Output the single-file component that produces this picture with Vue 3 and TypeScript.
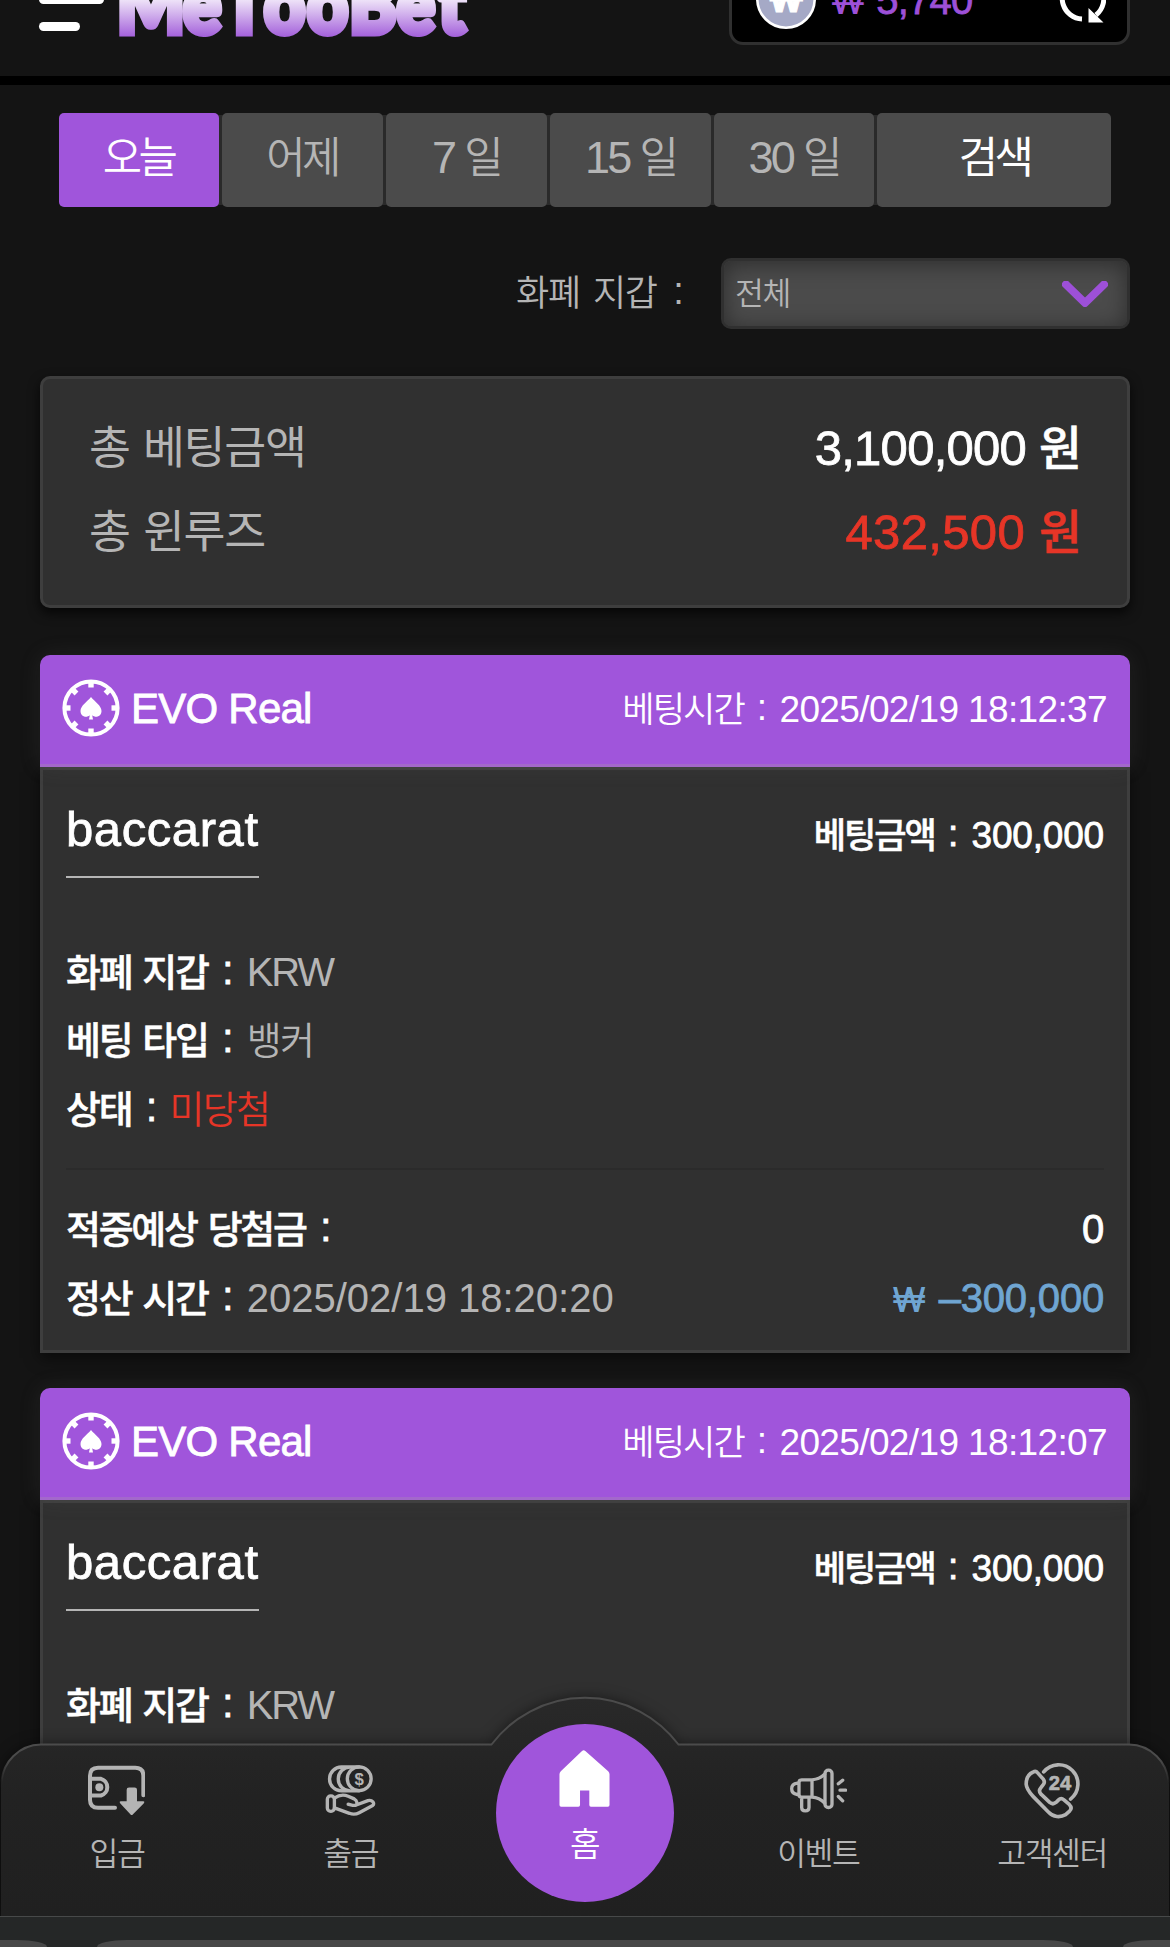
<script setup lang="ts">
import { h, ref } from 'vue'

interface Bet {
  provider: string
  placedAt: string
  game: string
  amount: string
  wallet: string
  betType: string
  status: string
  expected: string
  settledAt: string
  result: string
}

/* Splits mixed text into Hangul, label colons and Latin runs so each gets its own metrics. */
const Mixed = (props: { text: string }) =>
  h(
    'span',
    { class: 'mixed' },
    props.text
      .split(/([\uac00-\ud7a3]+|(?<= ):)/)
      .filter((run) => run)
      .map((run) => {
        if (run === ':') return h('span', { class: 'colon' }, run)
        return /[\uac00-\ud7a3]/.test(run) ? h('span', { class: 'ko' }, run) : run
      })
  )
Mixed.props = ['text']

const ranges = ['오늘', '어제', '7 일', '15 일', '30 일']
const activeRange = ref(0)

const bets: Bet[] = ['18:12:37', '18:12:07'].map((time) => ({
  provider: 'EVO Real',
  placedAt: `2025/02/19 ${time}`,
  game: 'baccarat',
  amount: '300,000',
  wallet: 'KRW',
  betType: '뱅커',
  status: '미당첨',
  expected: '0',
  settledAt: '2025/02/19 18:20:20',
  result: '–300,000',
}))

const ticks = [0, 45, 90, 135, 180, 225, 270, 315]
</script>

<template>
  <div class="page">
    <header class="top">
      <div class="top-row">
        <div class="menu"><i></i><i></i><i class="short"></i></div>
        <svg class="logo" viewBox="118 -47 352 92" width="352" height="92">
          <defs>
            <linearGradient id="logoFill" gradientUnits="userSpaceOnUse" x1="0" y1="-12" x2="0" y2="40">
              <stop offset="0" stop-color="#fff" />
              <stop offset="0.25" stop-color="#ecdff7" />
              <stop offset="1" stop-color="#9d55d8" />
            </linearGradient>
          </defs>
          <text transform="scale(0.88 1)" y="32.500" x="133 208 253 300 349 397 451 498">MeTooBet</text>
        </svg>
        <div class="balance">
          <svg class="coin" viewBox="-30 -30 60 60" width="60" height="60">
            <circle r="28.7" fill="#a5a9c6" stroke="#fff" stroke-width="2.6" />
            <text y="13" text-anchor="middle">₩</text>
          </svg>
          <span class="money"><span class="won">₩</span> 5,740</span>
          <svg class="refresh" viewBox="-24 -24 48 48" width="48" height="48">
            <path d="M0 20A20.8 20.8 0 0 1-12-17M-2-20.8A20.8 20.8 0 0 1 14 16" fill="none" stroke="#fff" stroke-width="5" />
            <path d="M6.500 9V23.500H21.500Z M-6-23V-9H-20Z" fill="#fff" />
          </svg>
        </div>
      </div>
    </header>

    <main>
      <div class="tabs">
        <button
          v-for="(r, i) in ranges"
          :key="r"
          class="tab"
          :class="{ active: i === activeRange }"
          @click="activeRange = i"
        ><Mixed :text="r" /></button>
        <button class="tab search"><Mixed text="검색" /></button>
      </div>

      <div class="filter">
        <span class="filter-label"><Mixed text="화폐 지갑 :" /></span>
        <div class="select">
          <Mixed text="전체" />
          <svg viewBox="0 0 46 26" width="46" height="26">
            <path d="M4 3.500L23 22L42 3.500" fill="none" stroke="#9d50d8" stroke-width="8" stroke-linecap="round" stroke-linejoin="round" />
          </svg>
        </div>
      </div>

      <section class="summary">
        <div><Mixed text="총 베팅금액" /><b class="med total"><Mixed text="3,100,000 원" /></b></div>
        <div><Mixed text="총 윈루즈" /><b class="med red"><Mixed text="432,500 원" /></b></div>
      </section>

      <article v-for="bet in bets" :key="bet.placedAt" class="bet">
        <div class="bet-head">
          <svg class="chip" viewBox="-29 -29 58 58" width="58" height="58">
            <circle r="26.6" fill="none" stroke="#fff" stroke-width="4" />
            <rect v-for="t in ticks" :key="t" x="-2.700" y="-26" width="5.400" height="5.500" fill="#fff" :transform="`rotate(${t})`" />
            <path
              d="M0-11C3.500-6.500 10.500-2.500 10.500 3C10.500 8.200 5 10.500 1.200 7.300L2 11.500H-2L-1.200 7.300C-5 10.500-10.500 8.200-10.500 3C-10.500-2.500-3.500-6.500 0-11Z"
              fill="#fff"
            />
          </svg>
          <span class="provider med">{{ bet.provider }}</span>
          <span class="placed"><Mixed :text="`베팅시간 : ${bet.placedAt}`" /></span>
        </div>
        <div class="bet-body">
          <div class="title-row">
            <span class="game med">{{ bet.game }}</span>
            <span class="amount med"><Mixed :text="`베팅금액 : ${bet.amount}`" /></span>
          </div>
          <div class="rows">
            <div><b class="med"><Mixed text="화폐 지갑 :" /></b><span class="val wallet">{{ bet.wallet }}</span></div>
            <div><b class="med"><Mixed text="베팅 타입 :" /></b><span class="val"><Mixed :text="bet.betType" /></span></div>
            <div><b class="med"><Mixed text="상태 :" /></b><span class="val red"><Mixed :text="bet.status" /></span></div>
          </div>
          <div class="rows settle">
            <div><b class="med"><Mixed text="적중예상 당첨금 :" /></b><b class="med end">{{ bet.expected }}</b></div>
            <div>
              <b class="med"><Mixed text="정산 시간 :" /></b><span class="val">{{ bet.settledAt }}</span>
              <b class="med end blue"><span class="won">₩</span> {{ bet.result }}</b>
            </div>
          </div>
        </div>
      </article>
    </main>

    <nav class="dock">
      <svg class="dock-shape" viewBox="0 0 1170 232" width="1170" height="232">
        <defs>
          <linearGradient id="dockFill" x1="0" y1="0" x2="0" y2="1">
            <stop offset="0" stop-color="#292929" />
            <stop offset="0.45" stop-color="#222" />
            <stop offset="1" stop-color="#202020" />
          </linearGradient>
          <linearGradient id="dockEdge" gradientUnits="userSpaceOnUse" x1="0" y1="75" x2="0" y2="100">
            <stop offset="0" stop-color="#4b4b4b" />
            <stop offset="1" stop-color="#4b4b4b" stop-opacity="0" />
          </linearGradient>
        </defs>
        <path
          class="dock-bg"
          d="M1 232V100.500A40 40 0 0 1 41 60.500H491.500A117 117 0 0 1 678.500 60.500H1129A40 40 0 0 1 1169 100.500V232Z"
          fill="url(#dockFill)"
        />
        <path
          d="M1.500 100A40 40 0 0 1 41 60.500H491.500A117 117 0 0 1 678.500 60.500H1129A40 40 0 0 1 1168.500 100"
          fill="none"
          stroke="url(#dockEdge)"
          stroke-width="2"
        />
      </svg>
      <div class="dock-items">
        <a class="item">
          <svg viewBox="264 315 171 150" width="57" height="50" fill="none" stroke="#b4b4b4" stroke-width="12" stroke-linecap="round">
            <path d="M430 404V346Q430 322 406 322H294Q270 322 270 346V418Q270 442 294 442H345M270 355H303A26 26 0 0 1 303 405H270" />
            <circle cx="298" cy="380" r="12" fill="#b4b4b4" stroke="none" />
            <path d="M380 388Q380 381 387 381H404Q411 381 411 388V422H429Q436 423 431 429L399 461Q395 466 391 461L361 429Q356 423 363 422H380Z" fill="#b4b4b4" stroke="none" />
          </svg>
          <Mixed text="입금" />
        </a>
        <a class="item">
          <svg viewBox="975 315 152 150" width="51" height="50" fill="none" stroke="#b4b4b4" stroke-width="10" stroke-linecap="round" stroke-linejoin="round">
            <path d="M1024 320A35 35 0 0 0 1024 391M1050 320A35 35 0 0 0 1050 391M1024 320H1077M1024 391H1077" />
            <circle cx="1077" cy="355" r="35.500" />
            <text class="dollar" x="1077" y="373" text-anchor="middle">$</text>
            <rect x="982" y="406" width="21" height="46" rx="10" />
            <path d="M1003 413C1018 402 1032 402 1044 407L1062 415C1071 420 1073 432 1066 434C1058 436 1050 431 1044 431M1066 434L1103 420C1116 417 1125 428 1117 435L1077 456C1066 462 1058 462 1048 458L1003 442" />
          </svg>
          <Mixed text="출금" />
        </a>
        <a class="item home">
          <svg viewBox="477 271 153 172" width="51" height="57">
            <path
              d="M546 274Q551 270 556 274L625 335Q629 339 629 344V437Q629 442 624 442H573Q568 442 568 437V393H540V437Q540 442 535 442H483Q478 442 478 437V344Q478 339 482 335Z"
              fill="#fff"
            />
          </svg>
          <Mixed text="홈" />
        </a>
        <a class="item">
          <svg viewBox="120 315 171 150" width="57" height="50" fill="none" stroke="#b4b4b4" stroke-width="10" stroke-linecap="round" stroke-linejoin="round">
            <path d="M147 368H142Q125 370 125 385Q125 400 142 402H147M147 366Q147 358 155 358H186V410H155Q147 410 147 402ZM186 358Q208 357 224 341M186 410Q208 411 224 428M155 411V441Q155 451 166 451Q177 451 177 441V411" />
            <rect x="225" y="329" width="21" height="112" rx="10" />
            <path d="M265 370L278 359M270 389H287M265 408L278 421" />
          </svg>
          <Mixed text="이벤트" />
        </a>
        <a class="item">
          <svg viewBox="823 304 170 172" width="56.700" height="57.300" fill="none" stroke="#b4b4b4" stroke-width="11" stroke-linecap="round" stroke-linejoin="round">
            <path d="M882 334A58 58 0 1 1 963 416" />
            <path d="M849 335C836 341 829 355 829 371C830 386 840 397 849 407L896 455C911 471 932 472 948 463L960 452C967 445 965 438 959 432L943 418C937 413 931 414 926 419L919 426C913 431 906 431 900 426L873 400C868 394 868 388 873 382L880 373C885 367 885 361 880 355L863 336C859 331 854 332 849 335Z" />
            <text class="all-day" x="931" y="388" text-anchor="middle">24</text>
          </svg>
          <Mixed text="고객센터" />
        </a>
      </div>
      <div class="browser-bar"><i class="side"></i><i class="mid"></i><i class="side right"></i></div>
    </nav>
  </div>
</template>

<style>
body {
  margin: 0;
  background: #141414;
}
.mixed .ko {
  font-family: 'Noto Sans CJK KR', sans-serif;
  font-size: 0.95em;
  line-height: 0;
  letter-spacing: var(--ko-ls, -0.045em);
  -webkit-text-stroke: var(--ko-stroke, 0);
}
.mixed .colon {
  position: relative;
  top: -0.05em;
  margin: 0 0.09em;
}
</style>

<style scoped>
.page {
  position: relative;
  width: 1170px;
  height: 1947px;
  overflow: hidden;
  box-sizing: border-box;
  background: #141414;
  color: #b5b5b5;
  font-family: 'Liberation Sans', 'Noto Sans CJK KR', sans-serif;
  font-weight: 350;
  letter-spacing: -0.012em;
  white-space: nowrap;
}
.med {
  --ko-ls: -0.06em;
  --ko-stroke: 0.5px currentColor;
  font-weight: 500;
  color: #fff;
  -webkit-text-stroke: 0.8px currentColor;
}
.page .red { color: #e63527; }
.page .blue { color: #6fa5d2; }
.won {
  margin-right: 2px;
  font-family: Inter, 'Noto Sans', sans-serif;
  font-size: 0.86em;
  line-height: 0;
  -webkit-text-stroke: 0;
}

.top {
  height: 76px;
  overflow: hidden;
  border-bottom: 9px solid #000;
}
.top-row {
  display: flex;
  align-items: center;
  height: 92px;
  margin-top: -47px;
  padding: 0 40px 0 39px;
}
.menu {
  display: flex;
  flex-direction: column;
  gap: 18px;
  width: 65px;
}
.menu i {
  height: 9px;
  border-radius: 4.5px;
  background: #fff;
}
.menu .short { width: 41px; }
.logo {
  flex: none;
  margin-left: 14px;
}
.logo text {
  font: 900 81px Lato, sans-serif;
  letter-spacing: 0;
  fill: url(#logoFill);
  stroke: url(#logoFill);
  stroke-width: 7px;
}
.balance {
  display: flex;
  align-items: center;
  box-sizing: border-box;
  width: 401px;
  height: 92px;
  margin-left: auto;
  padding: 0 21px 0 24px;
  border: 3px solid #303030;
  border-radius: 14px;
  background: #000;
}
.coin text {
  font: 800 33px Inter, sans-serif;
  fill: #fff;
  stroke: #fff;
  stroke-width: 1px;
}
.money {
  margin-left: 15px;
  padding-top: 2px;
  font-size: 40px;
  font-weight: 500;
  line-height: 60px;
  letter-spacing: -0.02em;
  color: #9d50d8;
  -webkit-text-stroke: 0.8px currentColor;
}
.refresh { margin-left: auto; }

.tabs {
  display: grid;
  grid-template-columns: 160px 161px 161px 161px 160px 234px;
  gap: 3px;
  width: 1052px;
  height: 94px;
  margin: 28px 0 0 59px;
  background: linear-gradient(#2a2a2a, #2a2a2a) center / 1040px 90px no-repeat;
}
.tab {
  min-width: 0;
  padding: 0 1px 5px 0;
  border: 0;
  border-radius: 5px;
  background: #4b4b4b;
  color: #b5b5b5;
  font: 350 45px 'Liberation Sans', sans-serif;
  letter-spacing: -0.06em;
  line-height: 89px;
  --ko-ls: -0.085em;
}
.tab.active { background: #a055db; color: #fff; }
.tab.search { padding-left: 2px; color: #fff; font-weight: 400; }

.filter {
  display: flex;
  justify-content: flex-end;
  align-items: center;
  height: 71px;
  margin: 51px 40px 0 0;
}
.filter-label {
  margin-right: 34px;
  font-size: 38px;
  line-height: 71px;
  word-spacing: 0.07em;
  --ko-ls: -0.035em;
}
.select {
  display: flex;
  align-items: center;
  justify-content: space-between;
  box-sizing: border-box;
  width: 409px;
  height: 71px;
  padding: 1px 19px 0 11px;
  border: 3px solid #303030;
  border-radius: 10px;
  background: #4b4b4b;
  box-shadow: inset 0 3px 22px rgba(0, 0, 0, 0.42);
  font-size: 33px;
  line-height: 60px;
}

.summary {
  box-sizing: border-box;
  height: 232px;
  margin: 47px 40px 0;
  padding: 27px 48px 0 46px;
  border: 3px solid #3e3e3e;
  border-radius: 10px;
  background: #303030;
  box-shadow: 0 5px 12px rgba(0, 0, 0, 0.75);
  font-size: 48px;
  font-weight: 400;
  line-height: 84px;
  --ko-ls: -0.027em;
}
.summary div { display: flex; justify-content: space-between; }
.summary b { font-size: 49px; letter-spacing: 0.007em; }
.summary .total { letter-spacing: -0.015em; }

.bet { margin: 47px 40px 0; }
.bet + .bet { margin-top: 35px; }
.bet-head {
  position: relative;
  display: flex;
  align-items: center;
  box-sizing: border-box;
  height: 112px;
  padding: 0 23px 1px 22px;
  border-bottom: 3px solid #a368cb;
  border-radius: 10px 10px 0 0;
  background: #a055db;
  box-shadow: 0 0 22px rgba(110, 110, 110, 0.14);
  color: #fff;
}
.chip { margin-bottom: 2px; }
.provider { margin-left: 11px; font-size: 42px; line-height: 60px; letter-spacing: -0.018em; }
.placed {
  margin-left: auto;
  padding-top: 2px;
  font-size: 37px;
  line-height: 60px;
  letter-spacing: -0.017em;
  --ko-ls: -0.055em;
}
.bet-body {
  box-sizing: border-box;
  height: 586px;
  padding: 29px 23px 0;
  border: 3px solid #3e3e3e;
  background: #303030;
  box-shadow: 0 5px 14px rgba(0, 0, 0, 0.55);
}
.title-row { display: flex; justify-content: space-between; height: 138.5px; }
.game {
  align-self: flex-start;
  padding-bottom: 17px;
  border-bottom: 2px solid #b5b5b5;
  font-size: 49px;
  line-height: 60px;
  letter-spacing: 0.012em;
}
.amount { margin-top: 7px; font-size: 37px; line-height: 60px; --ko-ls: -0.06em; }
.rows { font-size: 40px; line-height: 68.5px; }
.rows div { display: flex; }
.rows .val { margin-left: 10px; letter-spacing: 0; }
.rows .wallet { letter-spacing: -0.055em; }
.rows .red { margin-left: 9px; }
.rows .end { margin-left: auto; }
.settle { margin-top: 24.5px; padding-top: 25.5px; border-top: 2px solid #2b2b2b; }

.dock {
  position: absolute;
  left: 0;
  bottom: 0;
  width: 1170px;
  height: 263px;
}
.dock-shape { position: absolute; left: 0; top: 0; overflow: visible; }
.dock-bg { filter: drop-shadow(0 0 7px rgba(0, 0, 0, 0.55)); }
.dock-items {
  position: relative;
  display: grid;
  grid-template-columns: repeat(5, 1fr);
  box-sizing: border-box;
  height: 232px;
  padding: 0 1px 0 0;
}
.item {
  display: flex;
  flex-direction: column;
  align-items: center;
  padding-top: 78px;
  font-size: 33px;
  line-height: 40px;
}
.item svg { height: 57px; margin-bottom: 15px; }
.item.home {
  box-sizing: border-box;
  width: 178px;
  height: 178px;
  margin: 40px 0 0 28.4px;
  padding: 26px 1px 0 0;
  border-radius: 50%;
  background: #a055db;
  color: #fff;
  font-size: 35px;
}
.item.home svg { margin-bottom: 17px; }
.dollar { font: 700 50px 'Liberation Sans', sans-serif; fill: #b4b4b4; stroke: none; }
.all-day { font: 700 61px 'Liberation Sans', sans-serif; fill: #b4b4b4; stroke: #b4b4b4; stroke-width: 2px; letter-spacing: 0; }
.browser-bar {
  position: relative;
  display: flex;
  justify-content: space-between;
  align-items: flex-end;
  box-sizing: border-box;
  height: 31px;
  border-top: 1px solid #474949;
  background: #252727;
}
.browser-bar i { height: 7px; background: #484848; }
.browser-bar .side { width: 47px; border-radius: 0 30px 0 0 / 0 7px 0 0; }
.browser-bar .mid { width: 976px; border-radius: 30px 30px 0 0 / 7px 7px 0 0; }
.browser-bar .right { border-radius: 30px 0 0 0 / 7px 0 0 0; }
</style>
